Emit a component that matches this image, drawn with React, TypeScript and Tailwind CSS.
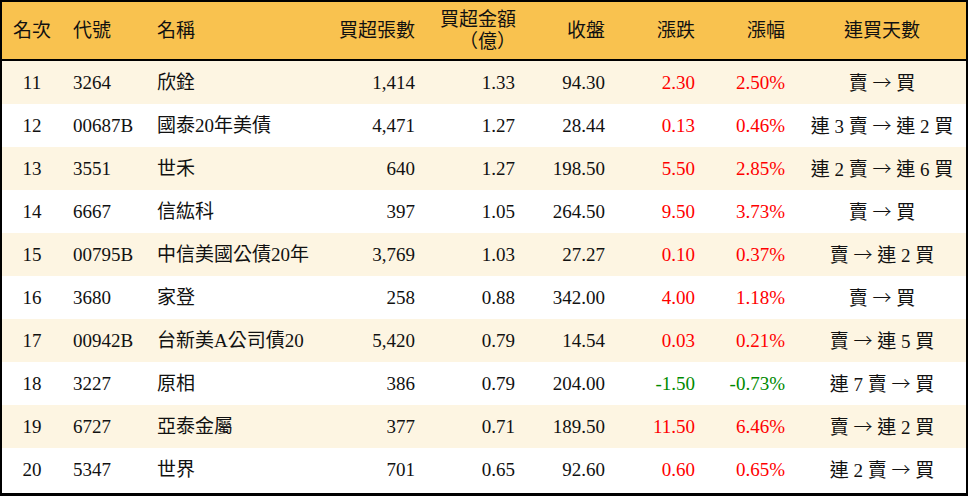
const rows = [
  { rank: 11, code: '3264', name: '欣銓', lots: '1,414', amt: '1.33', close: '94.30', chg: '2.30', pct: '2.50%', days: '賣 → 買' },
  { rank: 12, code: '00687B', name: '國泰20年美債', lots: '4,471', amt: '1.27', close: '28.44', chg: '0.13', pct: '0.46%', days: '連 3 賣 → 連 2 買' },
  { rank: 13, code: '3551', name: '世禾', lots: '640', amt: '1.27', close: '198.50', chg: '5.50', pct: '2.85%', days: '連 2 賣 → 連 6 買' },
  { rank: 14, code: '6667', name: '信紘科', lots: '397', amt: '1.05', close: '264.50', chg: '9.50', pct: '3.73%', days: '賣 → 買' },
  { rank: 15, code: '00795B', name: '中信美國公債20年', lots: '3,769', amt: '1.03', close: '27.27', chg: '0.10', pct: '0.37%', days: '賣 → 連 2 買' },
  { rank: 16, code: '3680', name: '家登', lots: '258', amt: '0.88', close: '342.00', chg: '4.00', pct: '1.18%', days: '賣 → 買' },
  { rank: 17, code: '00942B', name: '台新美A公司債20', lots: '5,420', amt: '0.79', close: '14.54', chg: '0.03', pct: '0.21%', days: '賣 → 連 5 買' },
  { rank: 18, code: '3227', name: '原相', lots: '386', amt: '0.79', close: '204.00', chg: '-1.50', pct: '-0.73%', days: '連 7 賣 → 買' },
  { rank: 19, code: '6727', name: '亞泰金屬', lots: '377', amt: '0.71', close: '189.50', chg: '11.50', pct: '6.46%', days: '賣 → 連 2 買' },
  { rank: 20, code: '5347', name: '世界', lots: '701', amt: '0.65', close: '92.60', chg: '0.60', pct: '0.65%', days: '連 2 賣 → 買' },
];

const grid = 'grid grid-cols-[60px_83px_175px_110px_100px_90px_90px_90px_1fr] items-center';

// the arrow is drawn from the CJK face so it takes a full em, as in the source
function Days({ text }: { text: string }) {
  const [left, right] = text.split(' → ');
  return (
    <>
      {left}{' '}
      <span className="font-light" style={{ fontFamily: '"Noto Sans CJK TC", sans-serif' }}>→</span>
      {' '}{right}
    </>
  );
}

export default function App() {
  return (
    <div
      className="w-[968px] h-[496px] bg-white text-[19px] text-[#111] leading-none"
      style={{ fontFamily: '"Liberation Serif", "Noto Sans CJK TC", serif' }}
    >
      <div className="h-full border-2 border-b-[3px] border-black flex flex-col">
        {/* header */}
        <div className={`${grid} h-[59px] bg-[#f9c24f] border-b-2 border-black`}>
          <div className="text-center">名次</div>
          <div className="pl-[11px]">代號</div>
          <div className="pl-[12px]">名稱</div>
          <div className="text-right pr-[15px]">買超張數</div>
          <div className="text-right pr-[14px] flex flex-col items-end gap-[3px]">
            <span>買超金額</span>
            <span>（億）</span>
          </div>
          <div className="text-right pr-[15px]">收盤</div>
          <div className="text-right pr-[15px]">漲跌</div>
          <div className="text-right pr-[15px]">漲幅</div>
          <div className="text-center pr-[2px]">連買天數</div>
        </div>

        {rows.map((r, i) => {
          const down = r.chg.startsWith('-');
          const tone = down ? 'text-[#008a00]' : 'text-[#ff0000]';
          return (
            <div key={r.rank} className={`${grid} h-[43px] ${i % 2 === 0 ? 'bg-[#fdf5e2]' : 'bg-white'}`}>
              <div className="text-center">{r.rank}</div>
              <div className="pl-[11px]">{r.code}</div>
              <div className="pl-[12px] whitespace-nowrap">{r.name}</div>
              <div className="text-right pr-[15px]">{r.lots}</div>
              <div className="text-right pr-[15px]">{r.amt}</div>
              <div className="text-right pr-[15px]">{r.close}</div>
              <div className={`text-right pr-[15px] ${tone}`}>{r.chg}</div>
              <div className={`text-right pr-[15px] ${tone}`}>{r.pct}</div>
              <div className="text-center pr-[2px] whitespace-nowrap">
                <Days text={r.days} />
              </div>
            </div>
          );
        })}
      </div>
    </div>
  );
}
